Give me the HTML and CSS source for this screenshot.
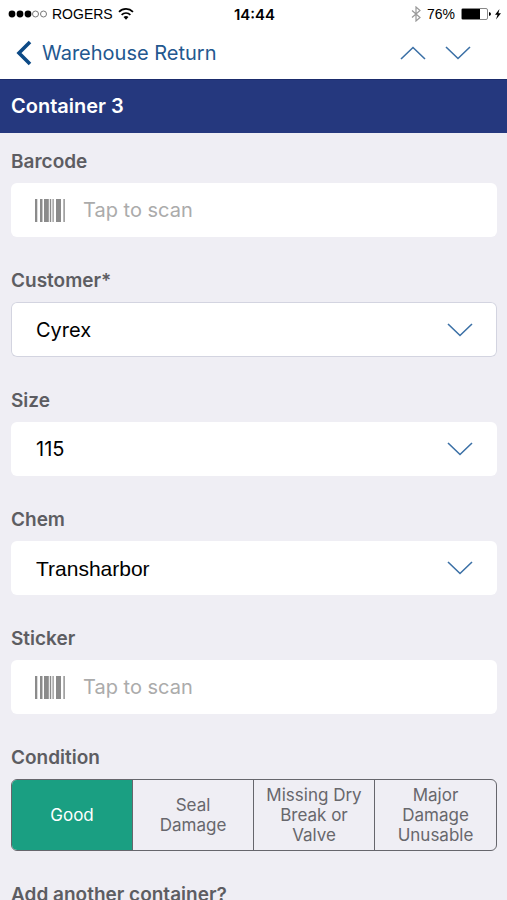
FILE: index.html
```html
<!DOCTYPE html>
<html lang="en">
<head>
<meta charset="utf-8">
<meta name="viewport" content="width=device-width, initial-scale=1">
<title>Warehouse Return</title>
<link rel="stylesheet" href="styles.css">
</head>
<body>
<svg class="sprite" aria-hidden="true">
  <symbol id="barcode" viewBox="0 0 30 23">
    <path d="M0 0h2.300v23H0zM5 0h2.500v23H5zM9 0h4.800v23H9zM14.800 0h1.400v23h-1.400zM17.500 0h1.200v23h-1.200zM21 0h5v23h-5zM28.400 0h1.400v23h-1.400z"/>
  </symbol>
  <symbol id="down" viewBox="0 0 26 14"><path d="M1 1l12 11.500L25 1"/></symbol>
  <symbol id="up" viewBox="0 0 26 14"><path d="M1 13L13 1.500 25 13"/></symbol>
</svg>
<div class="app">
  <div class="status">
    <div class="status-left">
      <svg width="39" height="8" viewBox="0 0 39 8" aria-hidden="true">
        <circle cx="4" cy="4" r="3.400"/><circle cx="12" cy="4" r="3.400"/><circle cx="20" cy="4" r="3.400"/>
        <g fill="none" stroke="#777"><circle cx="27.500" cy="4" r="3"/><circle cx="35.500" cy="4" r="3"/></g>
      </svg>
      <span>ROGERS</span>
      <svg class="wifi" width="16" height="12" viewBox="0 0 16 12" aria-hidden="true">
        <path d="M1 3.800a10 10 0 0 1 14 0M3.600 6.800a6.300 6.300 0 0 1 8.800 0" fill="none" stroke="#000" stroke-width="1.700"/>
        <path d="M5.500 9a4 4 0 0 1 5 0L8 11.800z"/>
      </svg>
    </div>
    <time>14:44</time>
    <div class="status-right">
      <svg width="10" height="16" viewBox="0 0 10 16" fill="none" stroke="#999" stroke-width="1.200" aria-hidden="true"><path d="M1 4.500l8 7L5 15V1l4 3.500-8 7"/></svg>
      <span>76%</span>
      <svg width="40" height="14" viewBox="0 0 40 14" aria-hidden="true">
        <rect x=".5" y="1.500" width="26" height="11" rx="1.500" fill="#fff" stroke="#888"/>
        <path d="M1 2h18v10H1zM28 5q2 .5 2 2t-2 2z"/>
        <path d="M38.500 2L34 7.800h2.500L35 12.500l5-6.200h-2.600z"/>
      </svg>
    </div>
  </div>
  <nav class="nav">
    <a class="back" href="#">
      <svg width="17" height="26" viewBox="0 0 17 26" aria-hidden="true"><path d="M15 2L4 13l11 11" fill="none" stroke="#0d4a86" stroke-width="3.600"/></svg>
      <span>Warehouse Return</span>
    </a>
    <div class="steps">
      <button type="button" aria-label="Previous container"><svg class="chevron"><use href="#up"/></svg></button>
      <button type="button" aria-label="Next container"><svg class="chevron"><use href="#down"/></svg></button>
    </div>
  </nav>
  <h1>Container 3</h1>
  <form class="form">
    <div class="field">
      <label class="caption" for="barcode-input">Barcode</label>
      <div class="box scan"><svg class="barcode" aria-hidden="true"><use href="#barcode"/></svg><input id="barcode-input" type="text" placeholder="Tap to scan"></div>
    </div>
    <div class="field">
      <label class="caption" for="customer">Customer*</label>
      <div class="box pick active"><select id="customer"><option>Cyrex</option></select><svg class="chevron" aria-hidden="true"><use href="#down"/></svg></div>
    </div>
    <div class="field">
      <label class="caption" for="size">Size</label>
      <div class="box pick"><select id="size"><option>115</option></select><svg class="chevron" aria-hidden="true"><use href="#down"/></svg></div>
    </div>
    <div class="field">
      <label class="caption" for="chem">Chem</label>
      <div class="box pick"><select id="chem" class="plain"><option>Transharbor</option></select><svg class="chevron" aria-hidden="true"><use href="#down"/></svg></div>
    </div>
    <div class="field">
      <label class="caption" for="sticker">Sticker</label>
      <div class="box scan"><svg class="barcode" aria-hidden="true"><use href="#barcode"/></svg><input id="sticker" type="text" placeholder="Tap to scan"></div>
    </div>
    <fieldset class="field">
      <legend class="caption">Condition</legend>
      <div class="segments">
        <label><input type="radio" name="condition" checked><span>Good</span></label>
        <label><input type="radio" name="condition"><span>Seal Damage</span></label>
        <label><input type="radio" name="condition"><span>Missing Dry Break or Valve</span></label>
        <label><input type="radio" name="condition"><span>Major Damage Unusable</span></label>
      </div>
    </fieldset>
    <div class="caption">Add another container?</div>
  </form>
</div>
</body>
</html>
```
FILE: styles.css
```css
* { box-sizing: border-box; }
body {
  margin: 0;
  background: #efeef4;
  color: #000;
  font-family: Inter, "Liberation Sans", sans-serif;
}
.sprite { position: absolute; width: 0; height: 0; }
.app { display: flex; flex-direction: column; height: 100vh; }

.status {
  display: grid;
  grid-template-columns: 1fr auto 1fr;
  align-items: center;
  flex: none;
  height: 28px;
  padding: 0 6px 0 8px;
  background: #fff;
  font: 14px "Liberation Sans", sans-serif;
}
.status-left, .status-right { display: flex; align-items: center; gap: 5px; }
.status-right { justify-content: flex-end; gap: 6px; }
.status time { font: 600 15px Inter, sans-serif; }

.nav {
  display: flex;
  align-items: center;
  justify-content: space-between;
  flex: none;
  height: 51px;
  padding: 0 36px 2px 15px;
  background: #fff;
}
.back {
  display: flex;
  align-items: center;
  gap: 10px;
  color: #23588f;
  font-size: 20px;
  text-decoration: none;
}
.steps { display: flex; gap: 19px; }
.steps button { display: flex; padding: 0; border: 0; background: none; }
.chevron { width: 26px; height: 14px; fill: none; stroke: #3b70a6; stroke-width: 1.6; }

h1 {
  flex: none;
  margin: 0;
  padding: 0 11px;
  border-top: 1px solid #1b2c6c;
  background: #25387e;
  color: #fff;
  font-size: 20px;
  font-weight: 600;
  line-height: 53px;
}

.form {
  display: flex;
  flex-direction: column;
  flex: 1;
  gap: 32px;
  min-height: 0;
  padding: 17px 10px 0 11px;
  overflow-y: auto;
  scrollbar-width: none;
}
.field { flex: none; min-width: 0; margin: 0; padding: 0; border: 0; }
.caption {
  display: block;
  margin-bottom: 9px;
  padding: 0;
  color: #5d5d62;
  font-size: 19px;
  font-weight: 600;
  line-height: 24px;
}
.box {
  display: flex;
  align-items: center;
  min-height: 54px;
  border-radius: 6px;
  background: #fff;
}
.box.active { min-height: 55px; box-shadow: inset 0 0 0 1px #d3d4e0; }
.barcode { flex: none; width: 30px; height: 23px; fill: #8b8b8b; }
.scan { gap: 18px; padding: 0 24px; }
.scan input {
  flex: 1;
  min-width: 0;
  padding: 0;
  border: 0;
  background: none;
  font: 20px Inter, sans-serif;
}
.scan input::placeholder { color: #ababab; opacity: 1; }
.pick { display: grid; grid-template-columns: 1fr; }
.pick select {
  grid-area: 1 / 1;
  align-self: stretch;
  padding: 0 60px 0 25px;
  border: 0;
  background: none;
  color: #000;
  font: 20px Inter, sans-serif;
  appearance: none;
}
.pick select.plain { font: 21px "Liberation Sans", sans-serif; }
.pick .chevron { grid-area: 1 / 1; justify-self: end; margin-right: 24px; pointer-events: none; }

.segments {
  display: grid;
  grid-template-columns: repeat(4, 1fr);
  min-height: 72px;
  border: 1px solid #66666c;
  border-radius: 6px;
  overflow: hidden;
}
.segments label {
  position: relative;
  display: grid;
  place-items: center;
  padding: 0 10px;
  border-right: 1px solid #66666c;
  color: #67676c;
  font-size: 17px;
  line-height: 20px;
  text-align: center;
}
.segments label:last-child { border-right: 0; }
.segments input { position: absolute; opacity: 0; }
.segments label:has(:checked) { background: #1a9f82; color: #fff; }
```
